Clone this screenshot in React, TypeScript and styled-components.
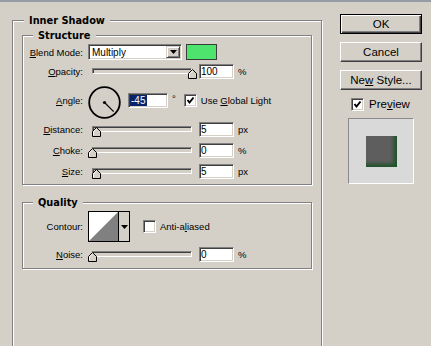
import styled, { createGlobalStyle, css } from "styled-components";

const GlobalStyle = createGlobalStyle`
  html, body {
    margin: 0;
    padding: 0;
  }
  body {
    width: 431px;
    height: 346px;
    overflow: hidden;
    background: #d4d0c8;
    color: #000;
    font-family: "Liberation Sans", Arial, sans-serif;
    font-size: 9.5px;
  }
`;

// classic win32 3d edges
const sunken = css`
  border: 1px solid;
  border-color: #808080 #ffffff #ffffff #808080;
  box-shadow: inset 1px 1px 0 #404040, inset -1px -1px 0 #d4d0c8;
`;

const raised = css`
  border: 1px solid;
  border-color: #d4d0c8 #404040 #404040 #d4d0c8;
  box-shadow: inset 1px 1px 0 #ffffff, inset -1px -1px 0 #808080;
`;

const TopEdge = styled.div`
  height: 2px;
  background: #959ca6;
`;

const Dialog = styled.div`
  display: flex;
  align-items: flex-start;
  padding: 12px 0 0 12px;
`;

const Frame = styled.fieldset<{ $w: number; $h?: number; $mt?: number }>`
  box-sizing: border-box;
  width: ${(p) => p.$w}px;
  ${(p) => (p.$h ? `height: ${p.$h}px;` : "")}
  margin: ${(p) => p.$mt ?? 0}px 0 0;
  padding: 0;
  min-width: 0;
  border: 1px solid #808080;
  box-shadow: inset 1px 1px 0 #ffffff, 1px 1px 0 #ffffff;
`;

const Legend = styled.legend<{ $indent: number }>`
  margin-left: ${(p) => p.$indent}px;
  padding: 0 5px;
  background: #d4d0c8;
  font-family: "DejaVu Sans", "Liberation Sans", sans-serif;
  font-weight: bold;
  font-size: 9.8px;
  line-height: 13px;
`;

const Body = styled.div<{ $pad: string }>`
  display: flex;
  flex-direction: column;
  padding: ${(p) => p.$pad};
`;

const Row = styled.div<{ $top?: number }>`
  display: flex;
  align-items: center;
  margin-top: ${(p) => p.$top ?? 0}px;
`;

const Label = styled.div`
  width: 60px;
  text-align: right;
  white-space: nowrap;
  line-height: 13px;
`;

const Key = styled.span`
  text-decoration: underline;
  text-underline-offset: 1px;
`;

const Combo = styled.div`
  box-sizing: border-box;
  display: flex;
  width: 94px;
  height: 16px;
  margin-left: 5px;
  padding: 1px;
  background: #ffffff;
  ${sunken}
`;

const ComboText = styled.div`
  flex: 1;
  padding-left: 2px;
  line-height: 13px;
  font-size: 10px;
`;

const ComboArrow = styled.div`
  box-sizing: border-box;
  display: flex;
  align-items: center;
  justify-content: center;
  width: 14px;
  background: #d4d0c8;
  ${raised}
`;

const Swatch = styled.div<{ $color: string }>`
  box-sizing: border-box;
  width: 31px;
  height: 16px;
  margin-left: 4px;
  border: 1px solid #3c3c3c;
  background: ${(p) => p.$color};
`;

const SliderBox = styled.div`
  position: relative;
  width: 108px;
  height: 15px;
  margin-left: 5px;
`;

const Track = styled.div`
  box-sizing: border-box;
  width: 100px;
  height: 6px;
  margin: 4px 0 0 4px;
  background: #d4d0c8;
  ${sunken}
`;

const ThumbMark = styled.svg`
  position: absolute;
  top: 5px;
  display: block;
`;

const Field = styled.div<{ $w: number; $ml: number }>`
  box-sizing: border-box;
  width: ${(p) => p.$w}px;
  height: 15px;
  margin-left: ${(p) => p.$ml}px;
  padding-left: 1px;
  background: #ffffff;
  ${sunken}
  font-size: 10px;
  line-height: 14px;
  white-space: nowrap;
  overflow: hidden;
`;

const Selected = styled.span`
  display: inline-block;
  padding: 0 2px 0 1px;
  line-height: 11px;
  background: #0a246a;
  color: #ffffff;
`;

const Unit = styled.div<{ $raise?: boolean }>`
  margin-left: 4px;
  line-height: 13px;
  ${(p) => (p.$raise ? "align-self: flex-start; margin-top: 6px;" : "")}
`;

const DialSvg = styled.svg`
  display: block;
  margin: 0 0 -4px 5px;
`;

const CheckBox = styled.div<{ $ml: number }>`
  box-sizing: border-box;
  display: flex;
  align-items: center;
  justify-content: center;
  width: 13px;
  height: 13px;
  margin-left: ${(p) => p.$ml}px;
  background: #ffffff;
  ${sunken}
`;

const CheckText = styled.div`
  margin-left: 4px;
  line-height: 13px;
  white-space: nowrap;
`;

const ContourBox = styled.div`
  box-sizing: border-box;
  display: flex;
  width: 42px;
  height: 31px;
  margin-left: 5px;
  border: 1px solid #000000;
  background: #ffffff;
`;

const ContourPick = styled.div`
  display: flex;
  align-items: center;
  justify-content: center;
  flex: 1;
  border-left: 1px solid #000000;
  background: #d4d0c8;
`;

const SideColumn = styled.div`
  display: flex;
  flex-direction: column;
  width: 82px;
  margin-left: 18px;
  font-size: 11.5px;
`;

const Button = styled.div<{ $default?: boolean }>`
  box-sizing: border-box;
  display: flex;
  align-items: center;
  justify-content: center;
  height: 20px;
  margin-bottom: 8px;
  background: #d4d0c8;
  white-space: nowrap;
  ${(p) =>
    p.$default
      ? css`
          border: 1px solid #000000;
          box-shadow: inset 1px 1px 0 #ffffff, inset -1px -1px 0 #404040,
            inset -2px -2px 0 #808080;
        `
      : css`
          border: 1px solid;
          border-color: #ffffff #404040 #404040 #ffffff;
          box-shadow: inset -1px -1px 0 #808080;
        `}
`;

const PreviewToggle = styled.div`
  display: flex;
  align-items: center;
  padding-left: 11px;
`;

const PreviewText = styled.div`
  margin-left: 5px;
  line-height: 13px;
`;

const PreviewBox = styled.div`
  box-sizing: border-box;
  display: flex;
  align-items: center;
  justify-content: center;
  width: 66px;
  height: 66px;
  margin: 7px 0 0 8px;
  border: 1px solid;
  border-color: #8a8a8a #ffffff #ffffff #8a8a8a;
  background: #d9d9da;
`;

const PreviewSquare = styled.div`
  width: 31px;
  height: 31px;
  background: #5e5e5e;
  box-shadow: inset -5px -5px 4px -2px #1b5228;
`;

const Thumb = ({ pct }: { pct: number }) => (
  <ThumbMark width="9" height="10" viewBox="0 0 9 10" style={{ left: 4 + pct - 4.5 }}>
    <path d="M0.5 9.5V4.5L4.5 0.5L8.5 4.5V9.5Z" fill="#d4d0c8" stroke="#000" />
    <path d="M1.5 8.5V4.9L4.5 1.9" fill="none" stroke="#fff" />
  </ThumbMark>
);

const Check = () => (
  <svg width="9" height="9" viewBox="0 0 9 9">
    <polyline points="1.5,4 3.5,6.5 7.5,1.5" fill="none" stroke="#000" strokeWidth="2" />
  </svg>
);

const DownArrow = () => (
  <svg width="7" height="4" viewBox="0 0 7 4">
    <path d="M0 0H7L3.5 4Z" fill="#000" />
  </svg>
);

const Dial = ({ angle }: { angle: number }) => {
  const rad = (angle * Math.PI) / 180;
  const x2 = 16.5 + Math.cos(rad) * 13;
  const y2 = 16.5 - Math.sin(rad) * 13;
  return (
    <DialSvg width="33" height="33" viewBox="0 0 33 33">
      <circle cx="16.5" cy="16.5" r="15.3" fill="none" stroke="#000" strokeWidth="1.8" />
      <line x1="16.5" y1="16.5" x2={x2} y2={y2} stroke="#000" strokeWidth="1.2" />
      <circle cx="16.5" cy="16.5" r="1.6" fill="#000" />
    </DialSvg>
  );
};

const SliderRow = ({
  label,
  hot,
  pct,
  value,
  unit,
  top,
}: {
  label: string;
  hot: string;
  pct: number;
  value: string;
  unit: string;
  top: number;
}) => (
  <Row $top={top}>
    <Label>
      <Key>{hot}</Key>
      {label.slice(hot.length)}:
    </Label>
    <SliderBox>
      <Track />
      <Thumb pct={pct} />
    </SliderBox>
    <Field $w={35} $ml={3}>
      {value}
    </Field>
    <Unit>{unit}</Unit>
  </Row>
);

export default function App() {
  const angle = -45;
  return (
    <>
      <GlobalStyle />
      <TopEdge />
      <Dialog>
        <Frame $w={310} $h={340}>
          <Legend $indent={11}>Inner Shadow</Legend>
          <Body $pad="2px 9px 0">
            <Frame $w={290}>
              <Legend $indent={10}>Structure</Legend>
              <Body $pad="2px 0 5px">
                <Row>
                  <Label>
                    <Key>B</Key>lend Mode:
                  </Label>
                  <Combo>
                    <ComboText>Multiply</ComboText>
                    <ComboArrow>
                      <DownArrow />
                    </ComboArrow>
                  </Combo>
                  <Swatch $color="#4de36c" />
                </Row>
                <SliderRow label="Opacity" hot="O" pct={100} value="100" unit="%" top={4} />
                <Row $top={7}>
                  <Label>
                    <Key>A</Key>ngle:
                  </Label>
                  <Dial angle={angle} />
                  <Field $w={40} $ml={7}>
                    <Selected>{angle}</Selected>
                  </Field>
                  <Unit $raise>°</Unit>
                  <CheckBox $ml={8}>
                    <Check />
                  </CheckBox>
                  <CheckText>
                    Use <Key>G</Key>lobal Light
                  </CheckText>
                </Row>
                <SliderRow label="Distance" hot="D" pct={4.5} value="5" unit="px" top={7} />
                <SliderRow label="Choke" hot="C" pct={0} value="0" unit="%" top={6} />
                <SliderRow label="Size" hot="S" pct={4.5} value="5" unit="px" top={6} />
              </Body>
            </Frame>
            <Frame $w={290} $mt={11}>
              <Legend $indent={10}>Quality</Legend>
              <Body $pad="2px 0 6px">
                <Row>
                  <Label>Contour:</Label>
                  <ContourBox>
                    <svg width="29" height="29" viewBox="0 0 29 29">
                      <path d="M0 29L29 0V29Z" fill="#808080" />
                    </svg>
                    <ContourPick>
                      <DownArrow />
                    </ContourPick>
                  </ContourBox>
                  <CheckBox $ml={13} />
                  <CheckText>
                    Anti-a<Key>l</Key>iased
                  </CheckText>
                </Row>
                <SliderRow label="Noise" hot="N" pct={0} value="0" unit="%" top={5} />
              </Body>
            </Frame>
          </Body>
        </Frame>
        <SideColumn>
          <Button $default>OK</Button>
          <Button>Cancel</Button>
          <Button>
            Ne<Key>w</Key>&nbsp;Style...
          </Button>
          <PreviewToggle>
            <CheckBox $ml={0}>
              <Check />
            </CheckBox>
            <PreviewText>
              Pre<Key>v</Key>iew
            </PreviewText>
          </PreviewToggle>
          <PreviewBox>
            <PreviewSquare />
          </PreviewBox>
        </SideColumn>
      </Dialog>
    </>
  );
}
